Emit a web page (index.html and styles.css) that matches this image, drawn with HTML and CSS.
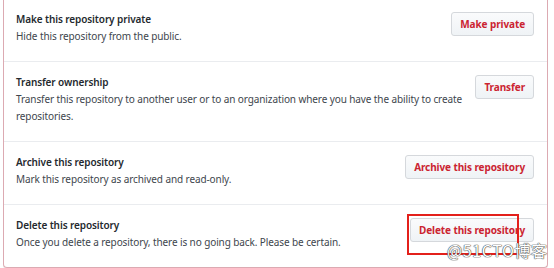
FILE: index.html
```html
<!DOCTYPE html>
<html lang="en">
<head>
    <meta charset="UTF-8">
    <title>Danger Zone</title>
    <link rel="stylesheet" href="styles.css">
</head>
<body>

    <div class="danger-box">
        <div class="danger-row">
            <div class="danger-text">
                <strong class="danger-title">Make this repository private</strong>
                <p class="danger-desc">Hide this repository from the public.</p>
            </div>
            <button class="btn-danger">Make private</button>
        </div>
        <div class="danger-row">
            <div class="danger-text">
                <strong class="danger-title">Transfer ownership</strong>
                <p class="danger-desc">Transfer this repository to another user or to an organization where you have the ability to create repositories.</p>
            </div>
            <button class="btn-danger">Transfer</button>
        </div>
        <div class="danger-row">
            <div class="danger-text">
                <strong class="danger-title">Archive this repository</strong>
                <p class="danger-desc">Mark this repository as archived and read-only.</p>
            </div>
            <button class="btn-danger">Archive this repository</button>
        </div>
        <div class="danger-row">
            <div class="danger-text">
                <strong class="danger-title">Delete this repository</strong>
                <p class="danger-desc">Once you delete a repository, there is no going back. Please be certain.</p>
            </div>
            <button class="btn-danger">Delete this repository</button>
        </div>
    </div>

    <div class="highlight"></div>
    <div class="watermark">@51CTO博客</div>

</body>
</html>
```

FILE: styles.css
```css
html, body {
    margin: 0;
    padding: 0;
    background: #fff;
    font-family: 'Noto Sans', 'Open Sans', sans-serif;
    font-size: 10px;
    color: #24292e;
}

body {
    position: relative;
    width: 554px;
    height: 268px;
    overflow: hidden;
}

.danger-box {
    margin: -1px 6px 0 3px;
    border: 1px solid #dcaab2;
    border-top: 0;
    border-radius: 0 0 4px 4px;
    box-shadow: 0 1px 0 #e4e4e4;
}

.danger-row {
    display: flex;
    align-items: flex-start;
    gap: 12px;
    padding: 12px 13px 16px 12px;
}

.danger-row + .danger-row {
    border-top: 1px solid #eaecef;
}

.danger-text {
    flex: 1;
    line-height: 17px;
    letter-spacing: -0.1px;
}

.danger-title {
    display: block;
    font-weight: 600;
    color: #24292e;
}

.danger-desc {
    margin: 0;
    color: #40464d;
}

.btn-danger {
    flex-shrink: 0;
    margin-top: 1px;
    padding: 3px 8px;
    font-family: inherit;
    font-size: 10px;
    font-weight: 700;
    line-height: 16px;
    letter-spacing: -0.1px;
    color: #cb2431;
    background: linear-gradient(#fafbfc, #eff3f6);
    border: 1px solid #d5d8dc;
    border-radius: 3px;
}

.highlight {
    position: absolute;
    left: 407px;
    top: 214px;
    width: 108px;
    height: 37px;
    border: 2px solid #e3201b;
}

.watermark {
    position: absolute;
    left: 447px;
    top: 240px;
    font-family: 'Noto Sans CJK SC', sans-serif;
    font-size: 16px;
    line-height: 20px;
    letter-spacing: 0.6px;
    color: #fff;
    text-shadow: 0 0 1px #444, 0 0 1px #444, 0 0 1px #444;
}
```
